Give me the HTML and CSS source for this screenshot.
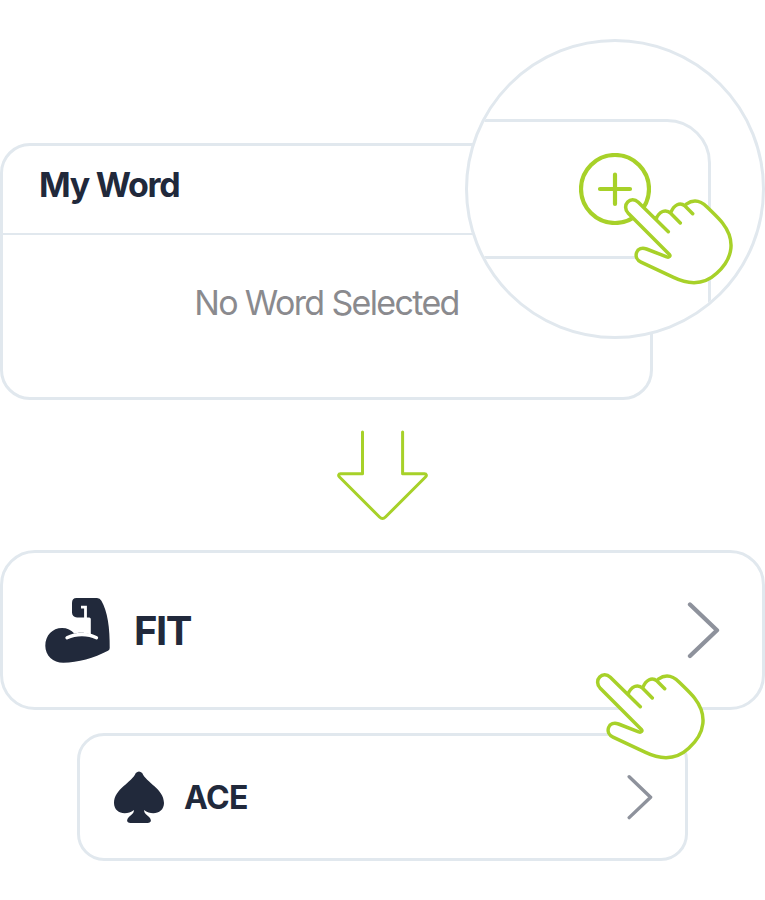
FILE: index.html
```html
<!DOCTYPE html>
<html lang="en">
<head>
<meta charset="utf-8">
<title>My Word</title>
<link rel="stylesheet" href="styles.css">
</head>
<body>
<svg class="symbols" aria-hidden="true">
  <symbol id="hand" viewBox="0 0 116 92">
    <path class="hand-fill" d="M48.3 36.7L18.3 7.3C14.8 4 10.5 4 7.7 7C4.8 10 5 14.7 8 17.9L49.4 59.5C50.7 61 49.2 62.7 46.7 61.9L26.5 54C22 52.5 18 53.7 16.6 57.5C15.2 61.5 17 65.2 21 67.1L53 82.2C70.3 90.6 85 89.3 96.7 78.3C113.7 63 115.5 44.7 102.5 28C98.5 22.9 92.5 17.5 87 12C80.8 5.8 73.6 4 66.3 9.1L65 11C60 8 54 10 50.7 17.5C45 14 39 16.5 36 24.3Z"/>
    <path class="hand-line" d="M48.3 36.7L18.3 7.3C14.8 4 10.5 4 7.7 7C4.8 10 5 14.7 8 17.9L49.4 59.5C50.7 61 49.2 62.7 46.7 61.9L26.5 54C22 52.5 18 53.7 16.6 57.5C15.2 61.5 17 65.2 21 67.1L53 82.2C70.3 90.6 85 89.3 96.7 78.3C113.7 63 115.5 44.7 102.5 28C98.5 22.9 92.5 17.5 87 12C80.8 5.8 73.6 4 66.3 9.1M36 24.3C39 16.2 45.8 13.6 50.7 18.3L60.3 28M50.7 17.8C54 9.5 60 6.8 65 11L72.7 18.7"/>
  </symbol>
</svg>
<main class="scene">
  <section class="word-card">
    <h1 class="word-title">My Word</h1>
    <p class="word-empty">No Word Selected</p>
    <div class="lens">
      <div class="lens-card"><div class="lens-head"></div></div>
      <svg class="plus" viewBox="0 0 72 72"><circle cx="36" cy="36" r="34"/><path d="M36 21.5V51M21 36H51"/></svg>
      <svg class="hand hand-top"><use href="#hand"/></svg>
    </div>
  </section>
  <svg class="arrow" viewBox="0 0 92 92"><path d="M25.5 2V43.8H3.5C1.5 43.8 1 45.5 2.5 47L42.5 87C44.5 89 46.5 89 48.5 87L88.5 47C90 45.5 89.5 43.8 87.5 43.8H65.6V2"/></svg>
  <section class="option option-large">
    <svg class="arm" viewBox="0 0 66 66">
      <path class="solid" d="M31.5 1H52Q55 1 56.4 3.7C62.5 14 65 31 64.7 51Q64.7 53 63 53.8C49 61 33 65.7 18.3 65.7C8 65.7 .3 58.5 .3 48.7C.3 38.5 7.5 31 17 31C22 31 26.5 33 29.3 36.6C33 35.5 39 35 45.8 37.5V22Q45.8 20.4 44.2 20.4H32C29 20.4 27 18.5 27 15.5V6Q27 1 31.5 1Z"/>
      <path class="cut" d="M36 10.2H40.5V21"/>
      <path class="cut cut-wide" d="M22 40.7C31 36.4 43 36.4 51.5 40.7"/>
    </svg>
    <span class="name">FIT</span>
    <svg class="chevron" viewBox="0 0 34 58"><path d="M4 3.5L31 29.3L4 55"/></svg>
    <svg class="hand hand-bottom"><use href="#hand"/></svg>
  </section>
  <section class="option option-small">
    <svg class="spade" viewBox="0 0 50 52"><path class="solid" d="M21.8 2Q25 -1 28.2 2C32 11.5 50 18 50 32C50 42 38.5 45.5 30 39C30.5 43.5 33 43.5 35.5 46.5C38 49.5 37 52 33.5 52H16.5C13 52 12 49.5 14.5 46.5C17 43.5 19.5 43.5 20 39C11.5 45.5 0 42 0 32C0 18 18 11.5 21.8 2Z"/></svg>
    <span class="name">ACE</span>
    <svg class="chevron" viewBox="0 0 34 58"><path d="M4 3.5L31 29.3L4 55"/></svg>
  </section>
</main>
</body>
</html>
```

FILE: styles.css
```css
* { box-sizing: border-box; }
body { margin: 0; background: #fff; font-family: Inter, "Liberation Sans", sans-serif; color: #21293b; }
.symbols { position: absolute; width: 0; height: 0; }
.scene { display: flex; flex-direction: column; height: 900px; padding-top: 143px; overflow: hidden; }
svg { display: block; flex: none; fill: none; stroke-linecap: round; stroke-linejoin: round; }

.word-card { position: relative; flex: none; width: 653px; height: 257px; border: 3px solid #e1e8ee; border-radius: 30px; }
.word-title { margin: 0; height: 89px; padding: 0 36px; border-bottom: 2px solid #e1e8ee; font-size: 34px; line-height: 78px; font-weight: 650; letter-spacing: -1.3px; }
.word-empty { margin: 0; padding-top: 47px; text-align: center; color: #8a8a8e; font-size: 34px; line-height: 42px; letter-spacing: -1.65px; }

.lens { position: absolute; left: 462px; top: -107px; width: 300px; height: 300px; border: 3px solid #e1e8ee; border-radius: 50%; background: #fff; overflow: hidden; }
.lens-card { width: 343px; height: 240px; margin: 77px 0 0 -100px; border: 3px solid #e1e8ee; border-radius: 44px; }
.lens-head { height: 137px; border-bottom: 3px solid #e1e8ee; }
.plus { position: absolute; left: 111px; top: 111px; width: 72px; height: 72px; stroke: #a7d129; stroke-width: 4.2; }

.hand { position: absolute; width: 116px; height: 92px; }
.hand-top { left: 151.7px; top: 153px; }
.hand-bottom { left: 589.3px; top: 116.8px; }
.hand-fill { fill: #fff; }
.hand-line { stroke: #a7d129; stroke-width: 3.5; }

.arrow { width: 92px; height: 92px; margin: 30px 0 28px 337px; stroke: #a7d129; stroke-width: 3; }

.option { position: relative; z-index: 0; flex: none; display: flex; align-items: center; border: 3px solid #e1e8ee; }
.option-large { z-index: 1; width: 765px; height: 160px; border-radius: 35px; padding: 0 42px; }
.option-small { width: 611px; height: 128px; margin: 23px 0 0 77px; border-radius: 27px; padding: 0 32px 0 34px; }
.solid { fill: #21293b; }
.arm { width: 66px; height: 66px; }
.cut { stroke: #fff; stroke-width: 2.8; stroke-linecap: butt; stroke-linejoin: miter; }
.cut-wide { stroke-width: 3.3; stroke-linecap: round; }
.spade { width: 50px; height: 52px; }
.name { flex: 1; font-weight: 650; }
.option-large .name { margin-left: 23px; font-size: 40px; letter-spacing: -1.5px; }
.option-small .name { margin-left: 20px; font-size: 32px; letter-spacing: -0.6px; }
.chevron { stroke: #8e929c; stroke-width: 4.3; }
.option-large .chevron { width: 34px; height: 58px; }
.option-small .chevron { width: 27px; height: 46px; }
```
